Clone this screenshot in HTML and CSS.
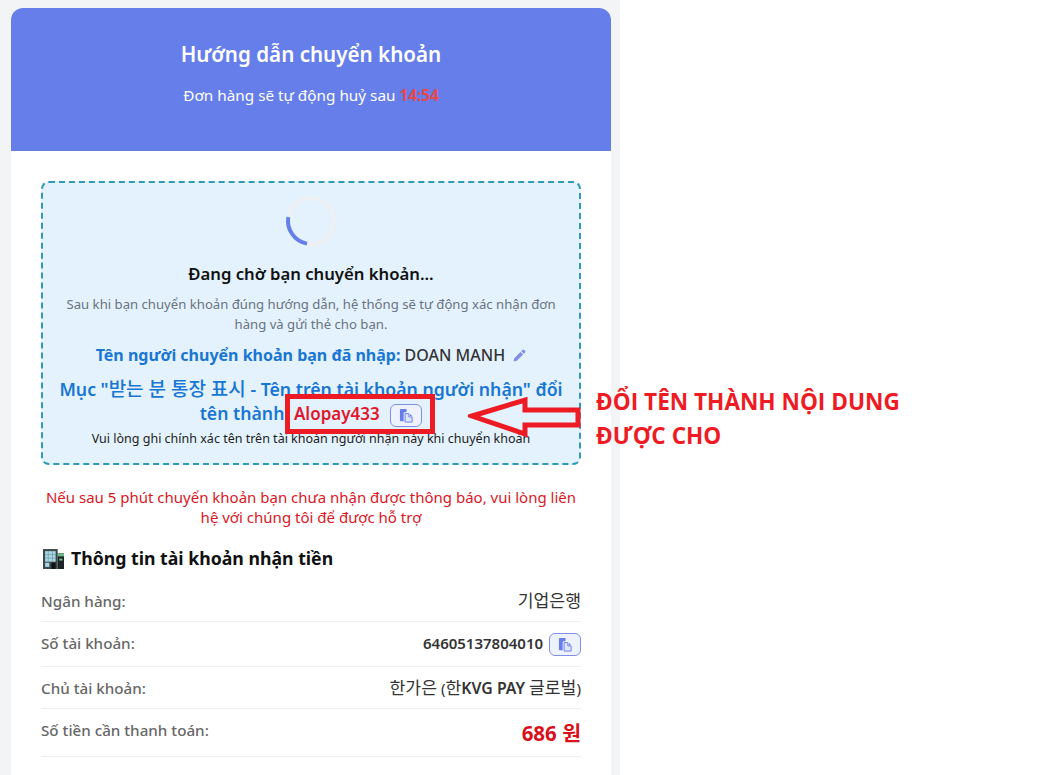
FILE: index.html
```html
<!DOCTYPE html>
<html lang="vi">
<head>
<meta charset="UTF-8">
<title>Hướng dẫn chuyển khoản</title>
<link rel="stylesheet" href="styles.css">
</head>
<body>

<div class="page">
    <div class="card">
        <div class="header">
            <h1>Hướng dẫn chuyển khoản</h1>
            <p>Đơn hàng sẽ tự động huỷ sau <span class="timer">14:54</span></p>
        </div>

        <div class="content">
            <div class="waiting">
                <div class="spinner"></div>
                <h3>Đang chờ bạn chuyển khoản...</h3>
                <p class="hint">Sau khi bạn chuyển khoản đúng hướng dẫn, hệ thống sẽ tự động xác nhận đơn hàng và gửi thẻ cho bạn.</p>
                <p class="sender">Tên người chuyển khoản bạn đã nhập: <span class="sender-name">DOAN MANH</span>
                    <svg class="pencil" viewBox="0 0 16 16"><path d="M11.6 1.2a1.6 1.6 0 0 1 2.3 0l.9.9a1.6 1.6 0 0 1 0 2.3l-1.5 1.5-3.2-3.2zM9.2 3.6l3.2 3.2-7.7 7.7-4 .9.9-4z"/></svg>
                </p>
                <p class="rename">Mục "<span class="ko">받는 분 통장 표시</span> - Tên trên tài khoản người nhận" đổi tên thành: <span class="code">Alopay433</span>
                    <button class="copy-btn copy-inline"><svg viewBox="0 0 16 16"><use href="#copy"/></svg></button>
                </p>
                <p class="note">Vui lòng ghi chính xác tên trên tài khoản người nhận này khi chuyển khoản</p>
            </div>

            <p class="warning">Nếu sau 5 phút chuyển khoản bạn chưa nhận được thông báo, vui lòng liên hệ với chúng tôi để được hỗ trợ</p>

            <h2 class="section-title">
                <svg class="building" viewBox="0 0 20 20">
                    <rect x="0" y="1" width="14" height="19" fill="#3d4a4c"/>
                    <rect x="14" y="5" width="6" height="15" fill="#1c2426"/>
                    <rect x="14" y="5" width="6" height="3" fill="#6fb98a"/>
                    <rect x="2" y="3" width="10" height="10" fill="#a9dbe6"/>
                    <rect x="2" y="14" width="4" height="4" fill="#a9d3e6"/>
                    <rect x="8" y="14" width="4" height="6" fill="#111"/>
                    <rect x="15.5" y="10" width="3" height="2" fill="#6fb98a"/>
                    <path d="M5 3v10M9 3v10M2 6.3h10M2 9.6h10" stroke="#6f98a4" stroke-width=".7"/>
                </svg>
                Thông tin tài khoản nhận tiền
            </h2>

            <div class="info-row">
                <span class="label">Ngân hàng:</span>
                <span class="value ko">기업은행</span>
            </div>
            <div class="info-row">
                <span class="label">Số tài khoản:</span>
                <span class="value strong">64605137804010 <button class="copy-btn"><svg viewBox="0 0 16 16"><use href="#copy"/></svg></button></span>
            </div>
            <div class="info-row">
                <span class="label">Chủ tài khoản:</span>
                <span class="value"><span class="ko">한가은</span> (<span class="ko">한</span><span class="strong latin">KVG PAY</span> <span class="ko">글로벌</span>)</span>
            </div>
            <div class="info-row">
                <span class="label">Số tiền cần thanh toán:</span>
                <span class="value amount">686 원</span>
            </div>
        </div>
    </div>
</div>

<!-- chu thich do dan len anh -->
<div class="red-box"></div>
<svg class="red-arrow" viewBox="0 0 113 44">
    <path d="M4 21 L57 5 V15 H110 V30 H57 V39 Z" fill="none" stroke="#ed1c24" stroke-width="5"/>
</svg>
<div class="callout">ĐỔI TÊN THÀNH NỘI DUNG<br>ĐƯỢC CHO</div>

<svg class="defs" width="0" height="0">
    <symbol id="copy" viewBox="0 0 16 16">
        <path d="M2 1h6v3.5H6a1 1 0 0 0-1 1V14H2a1 1 0 0 1-1-1V2a1 1 0 0 1 1-1z" fill="#667eea"/>
        <path d="M6.5 6h4v3.5H14V15H6.5z" fill="#dfe5fb" stroke="#667eea" stroke-width="1"/>
        <path d="M11.5 6l2.5 2.5h-2.5z" fill="#667eea"/>
    </symbol>
</svg>

</body>
</html>
```

FILE: styles.css
```css
html, body {
    margin: 0;
    height: 775px;
    overflow: hidden;
    background: #fff;
}

body {
    position: relative;
    font-family: "Noto Sans", "Noto Sans CJK KR", "Open Sans", sans-serif;
    color: #333;
}

.page {
    width: 620px;
    height: 775px;
    box-sizing: border-box;
    background: #f3f4f6;
    padding: 8px 9px 0 11px;
}

.card {
    background: #fff;
    border-radius: 12px 12px 0 0;
    height: 767px;
    overflow: hidden;
}

.header {
    background: #667eea;
    color: #fff;
    text-align: center;
    height: 143px;
    padding-top: 30px;
    box-sizing: border-box;
}

.header h1 {
    margin: 0;
    font-size: 20.6px;
    line-height: 33px;
    font-weight: 600;
}

.header p {
    margin: 14px 0 0;
    font-size: 15.3px;
    line-height: 20px;
}

.timer {
    color: #e5484d;
    font-weight: 700;
}

.content {
    padding: 30px 30px 0;
}

/* Khung cho chuyen khoan */
.waiting {
    background: #e3f2fd;
    border: 2px dashed #2e9ab8;
    border-radius: 8px;
    height: 284px;
    box-sizing: border-box;
    padding: 13px 12px 0;
    text-align: center;
}

.spinner {
    width: 42px;
    height: 42px;
    margin: 0 auto;
    border: 4px solid #eef0f4;
    border-left-color: #667eea;
    border-radius: 50%;
    transform: rotate(-35deg);
}

.waiting h3 {
    margin: 16px 0 0;
    font-size: 16.7px;
    line-height: 24px;
    font-weight: 600;
    color: #111;
}

.hint {
    margin: 9px 0 0;
    font-size: 13.15px;
    line-height: 19.5px;
    color: #6b7280;
}

.sender {
    margin: 10px 0 0;
    font-size: 16px;
    line-height: 22px;
    font-weight: 700;
    color: #1976d2;
}

.sender-name {
    font-weight: 500;
    color: #333;
}

.pencil {
    width: 13px;
    height: 13px;
    margin-left: 4px;
    fill: #7f8fe6;
    vertical-align: -1px;
}

.rename {
    margin: 11px 0 0;
    font-size: 17.7px;
    line-height: 24px;
    font-weight: 600;
    color: #1976d2;
}

.rename .ko {
    font-size: 19px;
    font-weight: 500;
}

.code {
    color: #e0182d;
    font-size: 17px;
}

.note {
    margin: 4px 0 0;
    font-size: 12.5px;
    line-height: 16px;
    color: #222;
}

.copy-btn {
    display: inline-flex;
    align-items: center;
    justify-content: center;
    width: 32px;
    height: 23px;
    padding: 0;
    margin-left: 2px;
    background: #eef2fd;
    border: 1px solid #7f8fe6;
    border-radius: 6px;
    vertical-align: middle;
}

.copy-btn svg {
    width: 15px;
    height: 15px;
}

.copy-inline {
    margin-left: 6px;
}

.warning {
    margin: 22px 0 0;
    text-align: center;
    font-size: 15px;
    line-height: 20px;
    color: #d9181f;
}

.section-title {
    margin: 18px 0 9px;
    font-size: 17.7px;
    line-height: 26px;
    font-weight: 700;
    color: #111;
    display: flex;
    align-items: center;
    gap: 7px;
    padding-left: 2px;
}

.building {
    width: 21px;
    height: 21px;
}

.info-row {
    display: flex;
    justify-content: space-between;
    align-items: flex-start;
    border-bottom: 1px solid #eceef1;
    font-size: 15.2px;
    line-height: 20px;
    padding: 11px 0 10px;
}

.label {
    color: #666;
    font-weight: 500;
}

.value {
    color: #333;
}

.ko {
    font-size: 17.2px;
}

.strong {
    font-weight: 600;
}

.value.strong {
    font-size: 15px;
}

.latin {
    font-size: 15.8px;
}

.amount {
    color: #d9101a;
    font-size: 20.5px;
    line-height: 26px;
    font-weight: 700;
}

/* Phan ve them */
.red-box {
    position: absolute;
    left: 285px;
    top: 394px;
    width: 150px;
    height: 40px;
    border: 5px solid #ed1c24;
    box-sizing: border-box;
}

.red-arrow {
    position: absolute;
    left: 468px;
    top: 395px;
    width: 113px;
    height: 44px;
}

.callout {
    position: absolute;
    left: 596px;
    top: 385px;
    font-size: 22.6px;
    line-height: 34px;
    font-weight: 700;
    font-family: "Open Sans", "Noto Sans", sans-serif;
    color: #ed1c24;
}

.defs {
    position: absolute;
}
```
